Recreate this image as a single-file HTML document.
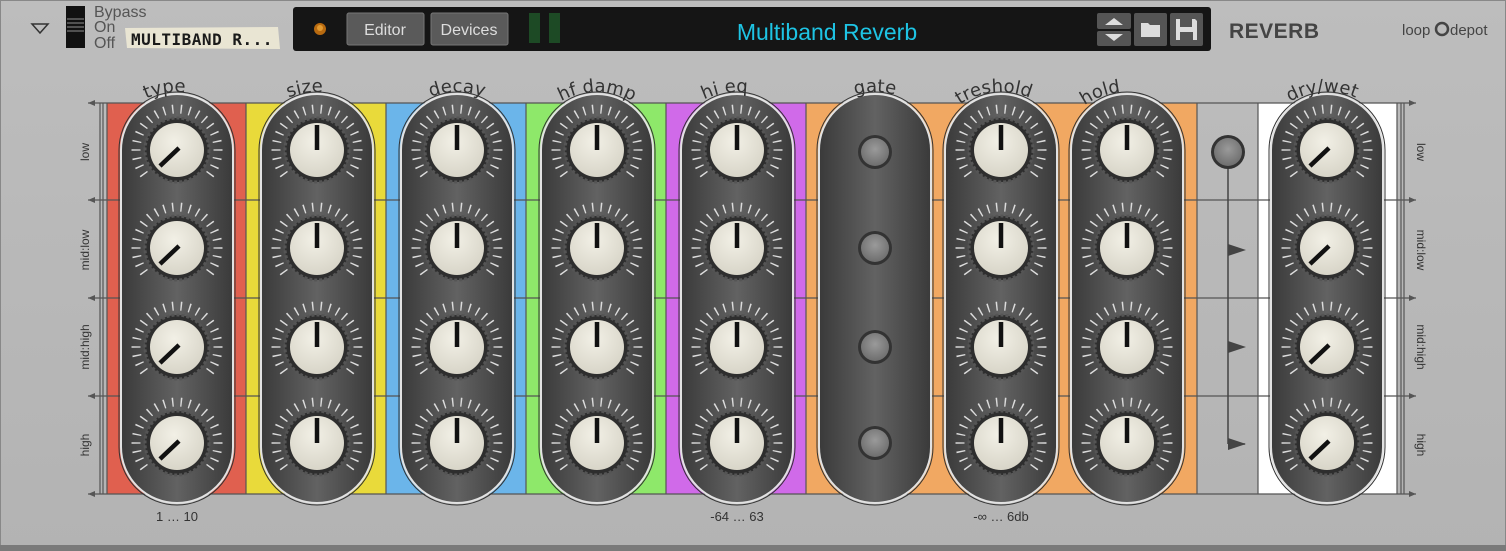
<!DOCTYPE html>
<html><head><meta charset="utf-8"><style>
html,body{margin:0;padding:0;width:1506px;height:551px;overflow:hidden;background:#b9b9b9}
svg{display:block}
</style></head><body>
<svg width="1506" height="551" viewBox="0 0 1506 551" xmlns="http://www.w3.org/2000/svg" font-family="'Liberation Sans',sans-serif">
<defs>
<linearGradient id="bg" x1="0" y1="0" x2="0" y2="1"><stop offset="0" stop-color="#bdbdbd"/><stop offset="1" stop-color="#b3b3b3"/></linearGradient>
<linearGradient id="pill" x1="0" y1="0" x2="1" y2="0"><stop offset="0" stop-color="#3a3a3a"/><stop offset="0.5" stop-color="#626262"/><stop offset="1" stop-color="#3a3a3a"/></linearGradient>
<radialGradient id="cream" cx="0.45" cy="0.35" r="0.7"><stop offset="0" stop-color="#f2f0e6"/><stop offset="1" stop-color="#d6d3c6"/></radialGradient>
<radialGradient id="btn" cx="0.5" cy="0.4" r="0.6"><stop offset="0" stop-color="#9a9a9a"/><stop offset="1" stop-color="#6e6e6e"/></radialGradient>
<clipPath id="cw"><polygon points="0,0 -60,60 -60,-60 60,-60 60,60"/></clipPath>
<g id="k">
<circle r="41" fill="none" stroke="#dcdcdc" stroke-width="9" pathLength="360" stroke-dasharray="2 10" clip-path="url(#cw)" transform="rotate(-1)"/>
<circle r="32" fill="#2e2e2e" stroke="#555" stroke-width="3" stroke-dasharray="3 2"/>
<circle r="27" fill="url(#cream)"/>
</g>
<g id="gb"><circle r="17" fill="#333"/><circle r="14" fill="url(#btn)"/></g>
</defs>
<rect width="1506" height="551" fill="url(#bg)"/>
<rect x="0.5" y="0.5" width="1505" height="550" fill="none" stroke="#888"/>
<rect x="0" y="545" width="1506" height="6" fill="#7a7a7a"/>

<polygon points="32,24 48,24 40,33" fill="none" stroke="#333" stroke-width="1.5"/>
<rect x="66" y="6" width="19" height="42" fill="#111"/>
<g stroke="#666" stroke-width="1.5"><line x1="67" y1="19" x2="84" y2="19"/><line x1="67" y1="23" x2="84" y2="23"/><line x1="67" y1="27" x2="84" y2="27"/><line x1="67" y1="31" x2="84" y2="31"/></g>
<g font-size="16" fill="#555"><text x="94" y="17">Bypass</text><text x="94" y="32">On</text><text x="94" y="48">Off</text></g>
<path d="M125,28 L278,27 L280,49 L127,48 Z" fill="#e9e5d3"/>
<text x="131" y="45" font-family="'DejaVu Sans Mono',monospace" font-weight="bold" font-size="16" fill="#1a1a1a" letter-spacing="0.5">MULTIBAND R...</text>

<rect x="293" y="7" width="918" height="44" rx="3" fill="#151515"/>
<circle cx="320" cy="29" r="6" fill="#b86a10"/><circle cx="320" cy="28" r="3" fill="#e39a30"/>
<rect x="347" y="13" width="77" height="32" rx="2" fill="#5a5a5a" stroke="#777"/>
<text x="385" y="35" text-anchor="middle" font-size="16" fill="#ddd">Editor</text>
<rect x="431" y="13" width="77" height="32" rx="2" fill="#5a5a5a" stroke="#777"/>
<text x="469" y="35" text-anchor="middle" font-size="16" fill="#ddd">Devices</text>
<g fill="#1d4a25"><rect x="529" y="13" width="11" height="30"/><rect x="549" y="13" width="11" height="30"/></g>
<text x="827" y="40" text-anchor="middle" font-size="23" fill="#1ec4e4">Multiband Reverb</text>
<rect x="1097" y="13" width="34" height="16" rx="2" fill="#555"/><rect x="1097" y="31" width="34" height="15" rx="2" fill="#555"/>
<polygon points="1105,25 1123,25 1114,18" fill="#ddd"/><polygon points="1105,34 1123,34 1114,41" fill="#ddd"/>
<rect x="1134" y="13" width="33" height="33" rx="2" fill="#555"/>
<path d="M1141,23 h7 l2,2 h10 v12 h-19 z" fill="#ddd"/>
<rect x="1170" y="13" width="33" height="33" rx="2" fill="#555"/>
<path d="M1176,19 h19 l2,2 v19 h-21 z" fill="#ddd"/><rect x="1180" y="19" width="12" height="8" fill="#555"/><rect x="1180" y="32" width="13" height="8" fill="#555"/>
<text x="1229" y="38" font-size="21" font-weight="bold" fill="#444" letter-spacing="0.5">REVERB</text>
<text x="1402" y="35" font-size="15" fill="#444">loop</text><circle cx="1442" cy="29" r="6" fill="none" stroke="#444" stroke-width="2.5"/><text x="1450" y="35" font-size="15" fill="#444">depot</text>

<rect x="107" y="103" width="139" height="391" fill="#e0604f"/>
<rect x="246" y="103" width="140" height="391" fill="#e9da3a"/>
<rect x="386" y="103" width="140" height="391" fill="#6bb5ea"/>
<rect x="526" y="103" width="140" height="391" fill="#8ee86a"/>
<rect x="666" y="103" width="140" height="391" fill="#d06ae9"/>
<rect x="806" y="103" width="391" height="391" fill="#f1a862"/>
<rect x="1258" y="103" width="139" height="391" fill="#fff"/>
<g stroke="#555" stroke-width="1.2" fill="none">
<line x1="107" y1="103" x2="107" y2="494"/><line x1="246" y1="103" x2="246" y2="494"/><line x1="386" y1="103" x2="386" y2="494"/><line x1="526" y1="103" x2="526" y2="494"/><line x1="666" y1="103" x2="666" y2="494"/><line x1="806" y1="103" x2="806" y2="494"/><line x1="1197" y1="103" x2="1197" y2="494"/><line x1="1258" y1="103" x2="1258" y2="494"/><line x1="1397" y1="103" x2="1397" y2="494"/>
<line x1="100" y1="103" x2="100" y2="494"/><line x1="103" y1="103" x2="103" y2="494"/><line x1="1401" y1="103" x2="1401" y2="494"/><line x1="1404" y1="103" x2="1404" y2="494"/>
<line x1="88" y1="103" x2="1416" y2="103"/><line x1="88" y1="200" x2="1416" y2="200"/><line x1="88" y1="298" x2="1416" y2="298"/><line x1="88" y1="396" x2="1416" y2="396"/><line x1="88" y1="494" x2="1416" y2="494"/>
</g>
<g fill="#555">
<polygon points="88,103 95,100 95,106"/><polygon points="88,200 95,197 95,203"/><polygon points="88,298 95,295 95,301"/><polygon points="88,396 95,393 95,399"/><polygon points="88,494 95,491 95,497"/>
<polygon points="1416,103 1409,100 1409,106"/><polygon points="1416,200 1409,197 1409,203"/><polygon points="1416,298 1409,295 1409,301"/><polygon points="1416,396 1409,393 1409,399"/><polygon points="1416,494 1409,491 1409,497"/>
</g>
<g font-size="12" fill="#333" text-anchor="middle">
<text transform="translate(89,152) rotate(-90)">low</text><text transform="translate(89,250) rotate(-90)">mid:low</text><text transform="translate(89,347) rotate(-90)">mid:high</text><text transform="translate(89,445) rotate(-90)">high</text>
<text transform="translate(1417,152) rotate(90)">low</text><text transform="translate(1417,250) rotate(90)">mid:low</text><text transform="translate(1417,347) rotate(90)">mid:high</text><text transform="translate(1417,445) rotate(90)">high</text>
</g>

<g stroke="#444" stroke-width="1.5"><line x1="1228" y1="165" x2="1228" y2="444"/><line x1="1228" y1="444" x2="1245" y2="444"/></g>
<g fill="#444"><polygon points="1228,244 1246,250 1228,256"/><polygon points="1228,341 1246,347 1228,353"/><polygon points="1228,438 1246,444 1228,450"/></g>
<use href="#gb" x="1228" y="152"/>

<g stroke="#e2e2e2" stroke-width="2" fill="url(#pill)">
<rect x="121" y="94" width="112" height="409" rx="56"/><rect x="261" y="94" width="112" height="409" rx="56"/><rect x="401" y="94" width="112" height="409" rx="56"/><rect x="541" y="94" width="112" height="409" rx="56"/><rect x="681" y="94" width="112" height="409" rx="56"/><rect x="819" y="94" width="112" height="409" rx="56"/><rect x="945" y="94" width="112" height="409" rx="56"/><rect x="1071" y="94" width="112" height="409" rx="56"/><rect x="1271" y="94" width="112" height="409" rx="56"/>
</g>
<g fill="none" stroke="#333" stroke-width="1">
<rect x="119" y="92" width="116" height="413" rx="58"/><rect x="259" y="92" width="116" height="413" rx="58"/><rect x="399" y="92" width="116" height="413" rx="58"/><rect x="539" y="92" width="116" height="413" rx="58"/><rect x="679" y="92" width="116" height="413" rx="58"/><rect x="817" y="92" width="116" height="413" rx="58"/><rect x="943" y="92" width="116" height="413" rx="58"/><rect x="1069" y="92" width="116" height="413" rx="58"/><rect x="1269" y="92" width="116" height="413" rx="58"/>
</g>

<g>
<use href="#k" x="177" y="150"/><use href="#k" x="177" y="248"/><use href="#k" x="177" y="347"/><use href="#k" x="177" y="443"/>
<use href="#k" x="317" y="150"/><use href="#k" x="317" y="248"/><use href="#k" x="317" y="347"/><use href="#k" x="317" y="443"/>
<use href="#k" x="457" y="150"/><use href="#k" x="457" y="248"/><use href="#k" x="457" y="347"/><use href="#k" x="457" y="443"/>
<use href="#k" x="597" y="150"/><use href="#k" x="597" y="248"/><use href="#k" x="597" y="347"/><use href="#k" x="597" y="443"/>
<use href="#k" x="737" y="150"/><use href="#k" x="737" y="248"/><use href="#k" x="737" y="347"/><use href="#k" x="737" y="443"/>
<use href="#k" x="1001" y="150"/><use href="#k" x="1001" y="248"/><use href="#k" x="1001" y="347"/><use href="#k" x="1001" y="443"/>
<use href="#k" x="1127" y="150"/><use href="#k" x="1127" y="248"/><use href="#k" x="1127" y="347"/><use href="#k" x="1127" y="443"/>
<use href="#k" x="1327" y="150"/><use href="#k" x="1327" y="248"/><use href="#k" x="1327" y="347"/><use href="#k" x="1327" y="443"/>
</g>
<g stroke="#111" stroke-width="4.5">
<line x1="179" y1="148" x2="160" y2="166"/><line x1="179" y1="246" x2="160" y2="264"/><line x1="179" y1="345" x2="160" y2="363"/><line x1="179" y1="441" x2="160" y2="459"/>
<line x1="1329" y1="148" x2="1310" y2="166"/><line x1="1329" y1="246" x2="1310" y2="264"/><line x1="1329" y1="345" x2="1310" y2="363"/><line x1="1329" y1="441" x2="1310" y2="459"/>
</g>
<g stroke="#111" stroke-width="4.5">
<line x1="317" y1="125" x2="317" y2="150"/><line x1="317" y1="223" x2="317" y2="248"/><line x1="317" y1="322" x2="317" y2="347"/><line x1="317" y1="418" x2="317" y2="443"/>
<line x1="457" y1="125" x2="457" y2="150"/><line x1="457" y1="223" x2="457" y2="248"/><line x1="457" y1="322" x2="457" y2="347"/><line x1="457" y1="418" x2="457" y2="443"/>
<line x1="597" y1="125" x2="597" y2="150"/><line x1="597" y1="223" x2="597" y2="248"/><line x1="597" y1="322" x2="597" y2="347"/><line x1="597" y1="418" x2="597" y2="443"/>
<line x1="737" y1="125" x2="737" y2="150"/><line x1="737" y1="223" x2="737" y2="248"/><line x1="737" y1="322" x2="737" y2="347"/><line x1="737" y1="418" x2="737" y2="443"/>
<line x1="1001" y1="125" x2="1001" y2="150"/><line x1="1001" y1="223" x2="1001" y2="248"/><line x1="1001" y1="322" x2="1001" y2="347"/><line x1="1001" y1="418" x2="1001" y2="443"/>
<line x1="1127" y1="125" x2="1127" y2="150"/><line x1="1127" y1="223" x2="1127" y2="248"/><line x1="1127" y1="322" x2="1127" y2="347"/><line x1="1127" y1="418" x2="1127" y2="443"/>
</g>
<use href="#gb" x="875" y="152"/><use href="#gb" x="875" y="248"/><use href="#gb" x="875" y="347"/><use href="#gb" x="875" y="443"/>

<defs>
<path id="a1" d="M102,167 A75,75 0 0 1 252,167"/><path id="a2" d="M242,167 A75,75 0 0 1 392,167"/><path id="a3" d="M382,167 A75,75 0 0 1 532,167"/><path id="a4" d="M522,167 A75,75 0 0 1 672,167"/><path id="a5" d="M662,167 A75,75 0 0 1 812,167"/><path id="a6" d="M800,167 A75,75 0 0 1 950,167"/><path id="a7" d="M926,167 A75,75 0 0 1 1076,167"/><path id="a8" d="M1052,167 A75,75 0 0 1 1202,167"/><path id="a9" d="M1252,167 A75,75 0 0 1 1402,167"/>
</defs>
<g font-family="'DejaVu Sans',sans-serif" font-size="18" fill="#333" text-anchor="middle">
<text><textPath href="#a1" startOffset="45%">type</textPath></text>
<text><textPath href="#a2" startOffset="45%">size</textPath></text>
<text><textPath href="#a3" startOffset="50%">decay</textPath></text>
<text><textPath href="#a4" startOffset="50%">hf damp</textPath></text>
<text><textPath href="#a5" startOffset="45%">hi eq</textPath></text>
<text><textPath href="#a6" startOffset="50%">gate</textPath></text>
<text><textPath href="#a7" startOffset="47%">treshold</textPath></text>
<text><textPath href="#a8" startOffset="39%">hold</textPath></text>
<text><textPath href="#a9" startOffset="48%">dry/wet</textPath></text>
</g>

<g font-size="13" fill="#333" text-anchor="middle">
<text x="177" y="521">1 … 10</text><text x="737" y="521">-64 … 63</text><text x="1001" y="521">-∞ … 6db</text>
</g>
</svg>
</body></html>
